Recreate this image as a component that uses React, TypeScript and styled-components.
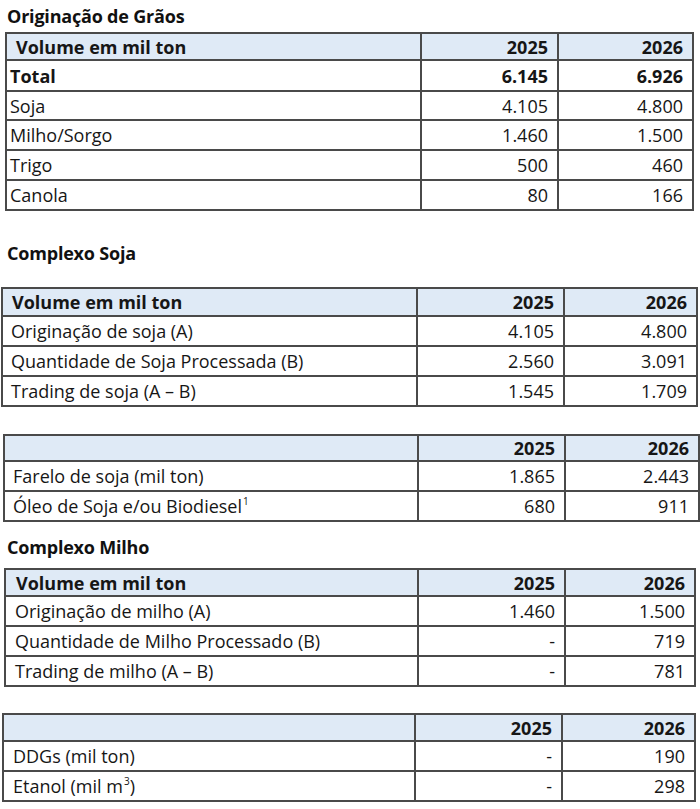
import React from "react";
import styled, { createGlobalStyle } from "styled-components";

const GlobalStyle = createGlobalStyle`
  html, body { margin: 0; padding: 0; background: #ffffff; }
  body {
    font-family: "Open Sans", "Noto Sans", "Liberation Sans", sans-serif;
    color: #151515;
  }
`;

const Page = styled.div`
  width: 700px;
  padding-top: 5px;
  display: flex;
  flex-direction: column;
`;

const Title = styled.h2<{ $top: number }>`
  margin: ${(p) => p.$top}px 0 0 7px;
  height: 22px;
  line-height: 22px;
  font-size: 18px;
  font-weight: 700;
  color: #111;
  letter-spacing: -0.2px;
`;

const Table = styled.div<{ $left: number; $cols: string; $top: number }>`
  margin-left: ${(p) => p.$left}px;
  margin-top: ${(p) => p.$top}px;
  width: fit-content;
  display: grid;
  grid-template-columns: ${(p) => p.$cols};
  border-top: 2px solid #4a4a4a;
  border-left: 2px solid #4a4a4a;
`;

const Cell = styled.div<{ $head?: boolean; $bold?: boolean; $num?: boolean; $pad: number; $h: number }>`
  height: ${(p) => p.$h}px;
  box-sizing: border-box;
  border-right: 2px solid #4a4a4a;
  border-bottom: 2px solid #4a4a4a;
  background: ${(p) => (p.$head ? "#dfeaf6" : "#ffffff")};
  display: flex;
  align-items: center;
  justify-content: ${(p) => (p.$num ? "flex-end" : "flex-start")};
  padding: 0 ${(p) => (p.$num ? 9 : 0)}px 0 ${(p) => (p.$num ? 0 : p.$pad)}px;
  font-size: 18px;
  font-weight: ${(p) => (p.$head || p.$bold ? 700 : 400)};
  color: #161616;
  white-space: nowrap;
`;

const Label = styled.span`
  display: inline-block;
  line-height: 24px;
`;

const Sup = styled.sup`
  font-size: 10px;
  line-height: 0;
  vertical-align: 8px;
  margin-left: 1px;
`;

type Row = { label: React.ReactNode; a: string; b: string; bold?: boolean };

type TableSpec = {
  left: number;
  cols: [number, number, number];
  top: number;
  headLabel: string;
  headH: number;
  headPad: number;
  bodyPad: number;
  rows: Row[];
  rowHs?: number[];
};

function DataTable({ spec }: { spec: TableSpec }) {
  const cols = spec.cols.map((c) => `${c}px`).join(" ");
  return (
    <Table $left={spec.left} $cols={cols} $top={spec.top}>
      <Cell $head $pad={spec.headPad} $h={spec.headH}>
        <Label>{spec.headLabel}</Label>
      </Cell>
      <Cell $head $num $pad={0} $h={spec.headH}>
        2025
      </Cell>
      <Cell $head $num $pad={0} $h={spec.headH}>
        2026
      </Cell>
      {spec.rows.map((r, i) => {
        const h = spec.rowHs ? spec.rowHs[i] : 30;
        return (
          <React.Fragment key={i}>
            <Cell $bold={r.bold} $pad={spec.bodyPad} $h={h}>
              <Label>{r.label}</Label>
            </Cell>
            <Cell $bold={r.bold} $num $pad={0} $h={h}>
              {r.a}
            </Cell>
            <Cell $bold={r.bold} $num $pad={0} $h={h}>
              {r.b}
            </Cell>
          </React.Fragment>
        );
      })}
    </Table>
  );
}

const graos: TableSpec = {
  left: 5,
  cols: [415, 137, 135],
  top: 5,
  headLabel: "Volume em mil ton",
  headH: 27,
  headPad: 9,
  bodyPad: 3,
  rowHs: [31, 29, 30, 30, 30],
  rows: [
    { label: "Total", a: "6.145", b: "6.926", bold: true },
    { label: "Soja", a: "4.105", b: "4.800" },
    { label: "Milho/Sorgo", a: "1.460", b: "1.500" },
    { label: "Trigo", a: "500", b: "460" },
    { label: "Canola", a: "80", b: "166" },
  ],
};

const soja1: TableSpec = {
  left: 1,
  cols: [415, 147, 133],
  top: 23,
  headLabel: "Volume em mil ton",
  headH: 28,
  headPad: 9,
  bodyPad: 8,
  rows: [
    { label: "Originação de soja (A)", a: "4.105", b: "4.800" },
    { label: "Quantidade de Soja Processada (B)", a: "2.560", b: "3.091" },
    { label: "Trading de soja (A – B)", a: "1.545", b: "1.709" },
  ],
};

const soja2: TableSpec = {
  left: 3,
  cols: [414, 147, 134],
  top: 27,
  headLabel: "",
  headH: 26,
  headPad: 9,
  bodyPad: 8,
  rows: [
    { label: "Farelo de soja (mil ton)", a: "1.865", b: "2.443" },
    {
      label: (
        <>
          Óleo de Soja e/ou Biodiesel<Sup>1</Sup>
        </>
      ),
      a: "680",
      b: "911",
    },
  ],
};

const milho1: TableSpec = {
  left: 4,
  cols: [413, 147, 130],
  top: 10,
  headLabel: "Volume em mil ton",
  headH: 27,
  headPad: 10,
  bodyPad: 9,
  rows: [
    { label: "Originação de milho (A)", a: "1.460", b: "1.500" },
    { label: "Quantidade de Milho Processado (B)", a: "-", b: "719" },
    { label: "Trading de milho (A – B)", a: "-", b: "781" },
  ],
};

const milho2: TableSpec = {
  left: 2,
  cols: [412, 147, 133],
  top: 26,
  headLabel: "",
  headH: 27,
  headPad: 9,
  bodyPad: 9,
  rows: [
    { label: "DDGs (mil ton)", a: "-", b: "190" },
    {
      label: (
        <>
          Etanol (mil m<Sup>3</Sup>)
        </>
      ),
      a: "-",
      b: "298",
    },
  ],
};

export default function App() {
  return (
    <>
      <GlobalStyle />
      <Page>
        <Title $top={0}>Originação de Grãos</Title>
        <DataTable spec={graos} />
        <Title $top={31}>Complexo Soja</Title>
        <DataTable spec={soja1} />
        <DataTable spec={soja2} />
        <Title $top={14}>Complexo Milho</Title>
        <DataTable spec={milho1} />
        <DataTable spec={milho2} />
      </Page>
    </>
  );
}
